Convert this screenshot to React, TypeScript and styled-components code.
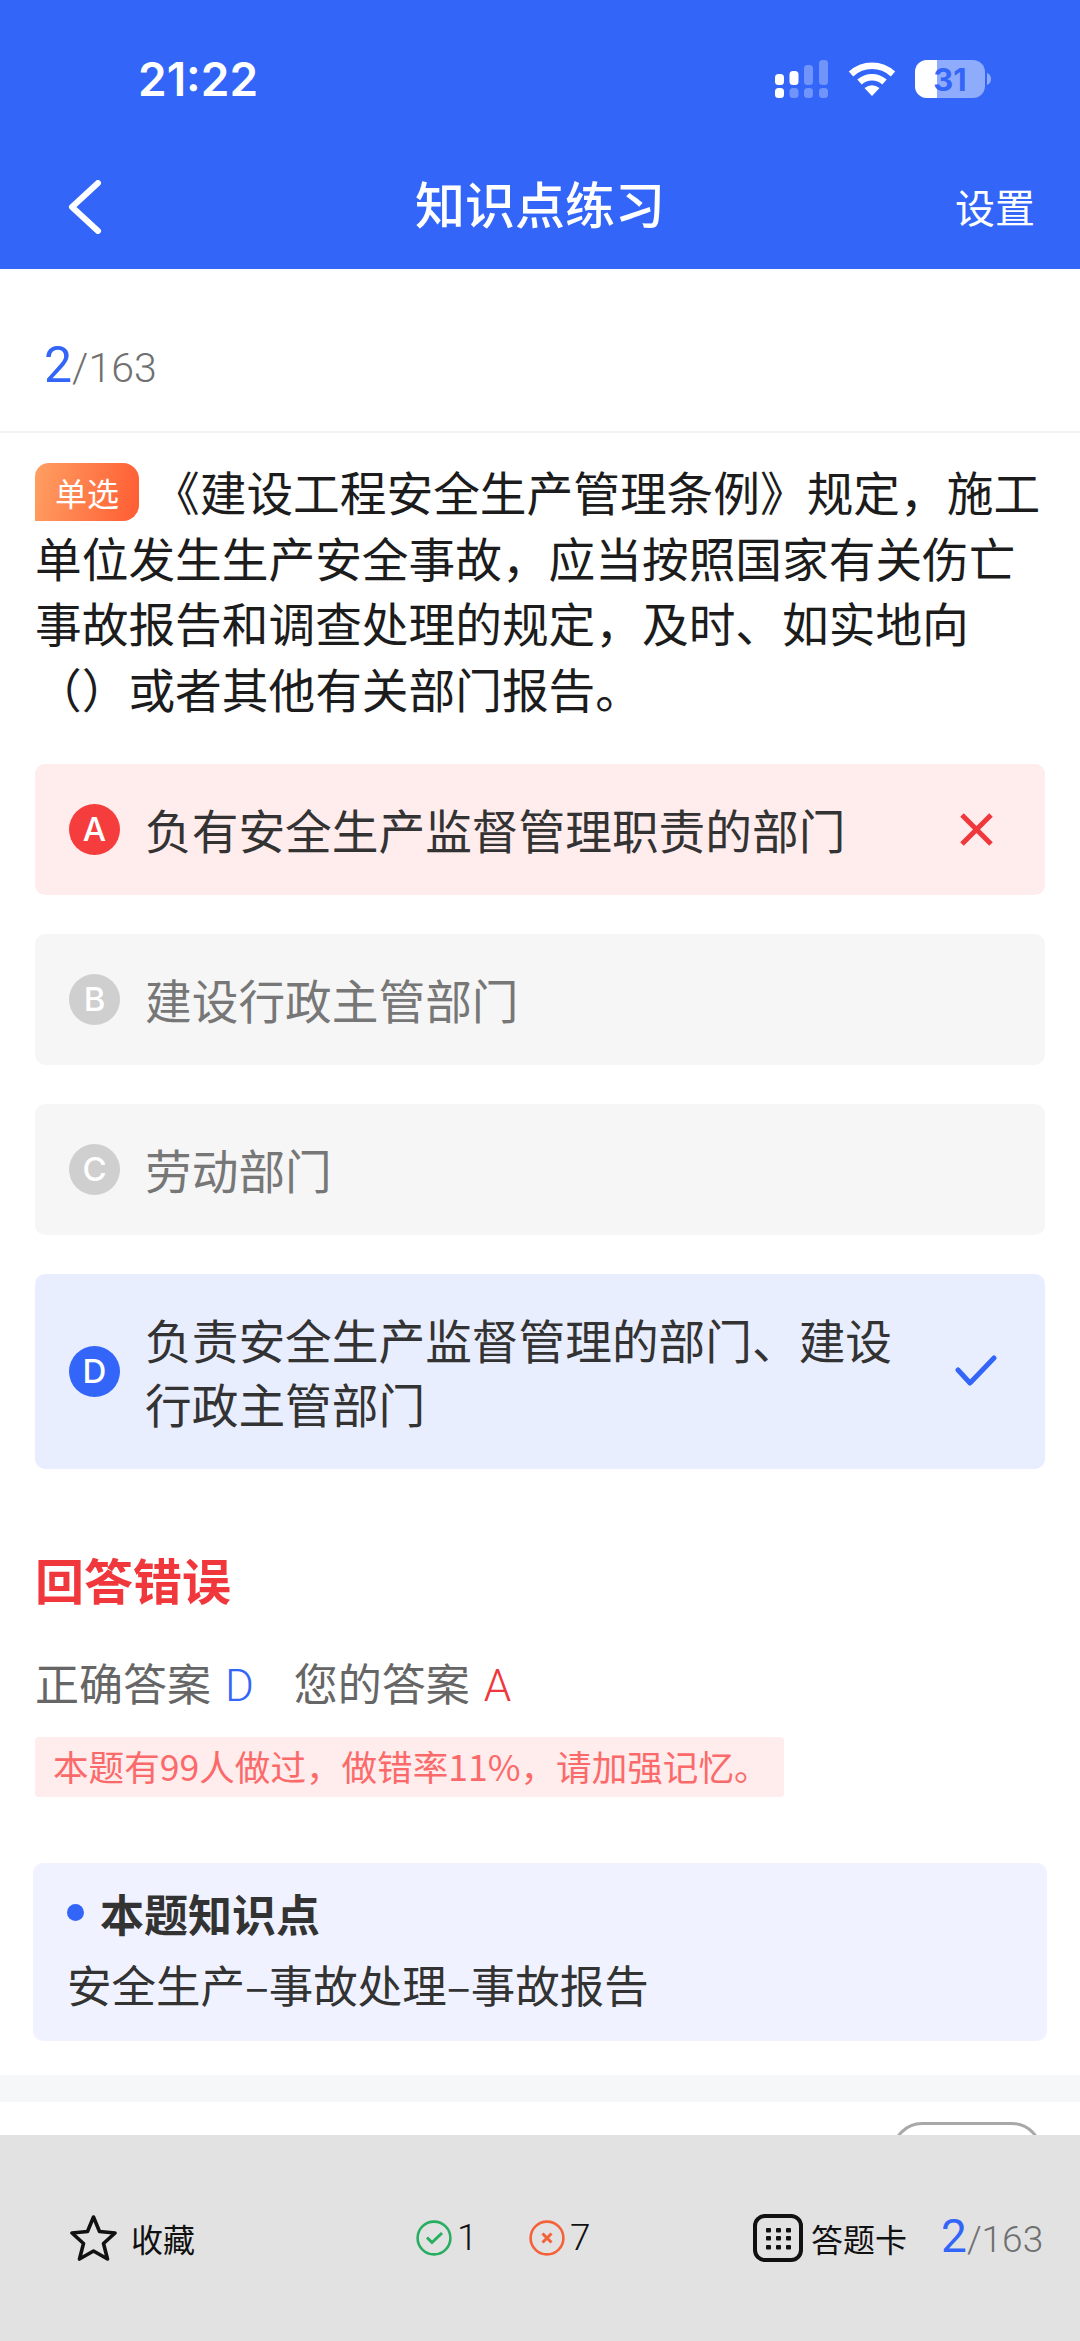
import React from "react";
import styled, { createGlobalStyle } from "styled-components";

const Global = createGlobalStyle`
  html, body { margin: 0; padding: 0; background: #fff; }
  body { width: 1080px; height: 2341px; overflow: hidden; font-family: "Noto Sans CJK SC", "Noto Sans", sans-serif; }
  * { box-sizing: border-box; }
`;
const Page = styled.div`
  width: 1080px; height: 2341px; display: flex; flex-direction: column; overflow: hidden; background: #fff;
`;
const Header = styled.header`
  height: 269px; background: #3366f8; color: #fff; display: flex; flex-direction: column; flex: none;
`;
const StatusBar = styled.div`
  height: 159px; padding: 0 89px 1px 138px; display: flex; align-items: center; justify-content: space-between;
`;
const Time = styled.div`
  font-family: Inter, sans-serif; font-weight: 600; font-size: 46px; line-height: 1;
`;
const StatusIcons = styled.div`
  display: flex; align-items: center; gap: 19px;
`;
const NavBar = styled.div`
  height: 110px; position: relative; display: flex; align-items: center; justify-content: space-between; padding: 0 45px 14px 66px;
`;
const NavTitle = styled.div`
  position: absolute; left: 0; right: 0; top: 8px; text-align: center; font-size: 50px; line-height: 70px; font-weight: 500;
`;
const NavAction = styled.div`
  font-size: 40px; line-height: 56px; margin-top: -2px;
`;
const Progress = styled.div`
  height: 164px; flex: none; padding: 66px 0 0 44px; border-bottom: 2px solid #f3f3f3; font-family: Roboto, sans-serif; line-height: 60px; color: #666;
`;
const ProgressNow = styled.span`
  font-size: ${p => p.$size}px; color: #3366f8;
`;
const ProgressAll = styled.span`
  font-size: ${p => p.$size}px; color: #707070; font-weight: 300;
`;
const Question = styled.div`
  margin: 25px 0 0 35px; font-size: 46.7px; line-height: 65.7px; color: #1c1c1c;
`;
const Tag = styled.span`
  display: inline-flex; width: 104px; height: 58px; margin-right: 14px; vertical-align: 5px; align-items: center; justify-content: center;
  font-size: 32px; line-height: 1; color: #fff; background: linear-gradient(100deg, #ff9f62, #ff5c33); border-radius: 14px 16px 16px 0;
`;
const Line = styled.span`
  display: block; white-space: nowrap;
`;
const Options = styled.div`
  margin: 43px 35px 0; display: flex; flex-direction: column; gap: 39px;
`;
const colors = {
  wrong: { bg: "#ffecec", badge: "#f53d3d", text: "#333" },
  none: { bg: "#f6f6f6", badge: "#cfcfcf", text: "#777" },
  right: { bg: "#e9eefe", badge: "#3366f8", text: "#333" },
};
const Option = styled.div`
  min-height: 131px; padding: 33.5px 48px 33.5px 34px; display: flex; align-items: center; border-radius: 10px;
  background: ${p => colors[p.$kind].bg}; color: ${p => colors[p.$kind].text};
`;
const Badge = styled.span`
  width: 51px; height: 51px; flex: none; border-radius: 50%; display: flex; align-items: center; justify-content: center;
  background: ${p => colors[p.$kind].badge}; color: #fff; font-family: Inter, sans-serif; font-weight: 500; font-size: 33px;
`;
const OptionText = styled.div`
  flex: 1; margin-left: 25px; font-size: 46.7px; line-height: 64px; padding-right: 40px;
`;
const OptionMark = styled.div`
  width: 42px; flex: none; display: flex; justify-content: center;
`;
const Result = styled.div`
  margin: 75px 35px 0;
`;
const ResultTitle = styled.div`
  font-size: 49px; line-height: 70px; font-weight: 700; color: #f0383c;
`;
const AnswerRow = styled.div`
  margin-top: 37px; display: flex; font-size: 44px; line-height: 62px; color: #666;
`;
const AnswerPart = styled.span`
  margin-right: 40px;
`;
const AnswerLetter = styled.span`
  font-family: Roboto, sans-serif; color: ${p => p.$c}; margin-left: 14px; font-weight: 300;
`;
const Tip = styled.div`
  margin-top: 20px; width: 749px; height: 60px; padding-left: 18px; font-size: 35.6px; line-height: 58px; color: #fb6a6a; background: #ffecec; border-radius: 4px; white-space: nowrap;
`;
const Knowledge = styled.div`
  margin: 66px 33px 0; height: 178px; border-radius: 10px; background: #f0f3ff; padding: 19px 34px;
`;
const KnowledgeTitle = styled.div`
  display: flex; align-items: center; gap: 16px; font-size: 44px; line-height: 62px; font-weight: 700; color: #333;
`;
const Dot = styled.i`
  width: 17px; height: 17px; border-radius: 50%; background: #3366f8;
`;
const KnowledgeText = styled.div`
  margin-top: 10px; font-size: 44.5px; line-height: 60px; color: #333;
`;
const Band = styled.div`
  margin-top: 34px; height: 27px; flex: none; background: #f5f7f8;
`;
const Peek = styled.div`
  height: 33px; flex: none; display: flex; justify-content: flex-end; padding: 20px 38px 0 0; overflow: hidden;
`;
const Pill = styled.div`
  width: 150px; height: 70px; border: 3px solid #a8a8a8; border-radius: 30px; flex: none;
`;
const BottomBar = styled.footer`
  flex: 1; background: #e2e2e2; display: flex; align-items: center; padding: 0 0 0 70px; color: #222;
`;
const BarGroup = styled.div`
  display: flex; align-items: center; gap: ${p => p.$gap || 0}px; flex: none;
`;
const BarStat = styled(BarGroup)`
  width: ${p => p.$w}px;
`;
const BarCount = styled.div`
  display: flex; align-items: baseline; line-height: 60px; font-family: Roboto, sans-serif; flex: none;
`;
const BarSpacer = styled.div`
  width: ${p => p.$w}px; flex: none;
`;
const BarLabel = styled.span`
  font-size: ${p => p.$size}px; line-height: 46px; color: #111;
`;
const BarNum = styled.span`
  font-family: Roboto, sans-serif; font-size: 37px; line-height: 46px; color: #111; font-weight: 300;
`;

const Signal = () => (
  <svg width="54" height="38" viewBox="0 0 54 38">
    <g fill="#fff">
      <rect x="0" y="14" width="9" height="11" rx="3.5" />
      <rect x="14.5" y="11" width="9" height="14" rx="3.5" />
      <rect x="0" y="28" width="9" height="10" rx="3.5" />
    </g>
    <g fill="#fff" opacity=".3">
      <rect x="29" y="5" width="9" height="20" rx="3.5" />
      <rect x="44" y="0" width="9" height="25" rx="3.5" />
      <rect x="14.5" y="28" width="9" height="10" rx="3.5" />
      <rect x="29" y="28" width="9" height="10" rx="3.5" />
      <rect x="44" y="28" width="9" height="10" rx="3.5" />
    </g>
  </svg>
);
const Wifi = () => (
  <svg width="48" height="36" viewBox="0 0 48 36" fill="none" stroke="#fff" strokeWidth="6.5">
    <path d="M3 13C15 2 33 2 45 13" />
    <path d="M11.5 21C18.5 14.5 29.5 14.5 36.5 21" />
    <path d="M24 35 L16.5 27 Q24 21.5 31.5 27 Z" fill="#fff" stroke="none" />
  </svg>
);
const Battery = () => (
  <svg width="76" height="38" viewBox="0 0 76 38">
    <rect x="0" y="0" width="70" height="38" rx="12" fill="#fff" opacity=".45" />
    <path d="M12 0H22V38H12A12 12 0 0 1 0 26V12A12 12 0 0 1 12 0Z" fill="#fff" />
    <path d="M72 13C75 14 76 17 76 19C76 21 75 24 72 25Z" fill="#fff" opacity=".45" />
    <text x="35" y="31" textAnchor="middle" fontFamily="Inter, sans-serif" fontWeight="700" fontSize="31" fill="#3366f8">31</text>
  </svg>
);
const Back = () => (
  <svg width="36" height="54" viewBox="0 0 36 54" fill="none" stroke="#fff" strokeWidth="6" strokeLinecap="round" strokeLinejoin="round">
    <path d="M32 3L6 27L32 51" />
  </svg>
);
const Cross = () => (
  <svg width="33" height="33" viewBox="0 0 33 33" fill="none" stroke="#f0383c" strokeWidth="5">
    <path d="M2 2L31 31M31 2L2 31" />
  </svg>
);
const Check = () => (
  <svg width="42" height="32" viewBox="0 0 42 32" fill="none" stroke="#3366f8" strokeWidth="5" strokeLinecap="round" strokeLinejoin="round">
    <path d="M3 15L15 28L39 3" />
  </svg>
);
const Star = () => (
  <svg width="47" height="47" viewBox="0 0 47 47" fill="none" stroke="#111" strokeWidth="3.6" strokeLinejoin="round">
    <path d="M23.5 3L29.5 17.5L45 19L33.5 29.5L37.5 45L23.5 37L9.5 45L13.5 29.5L2 19L17.5 17.5Z" />
  </svg>
);
const OkCircle = () => (
  <svg width="36" height="36" viewBox="0 0 36 36" fill="none" stroke="#27ae60" strokeWidth="2.6">
    <circle cx="18" cy="18" r="16.4" />
    <path d="M11 17.5L16 22.5L26 13" strokeWidth="3" />
  </svg>
);
const NoCircle = () => (
  <svg width="36" height="36" viewBox="0 0 36 36" fill="none" stroke="#f4623a" strokeWidth="2.6">
    <circle cx="18" cy="18" r="16.4" />
    <path d="M13.5 13.5L22.5 22.5M22.5 13.5L13.5 22.5" strokeWidth="3" />
  </svg>
);
const CardIcon = () => (
  <svg width="50" height="48" viewBox="0 0 50 48" fill="none">
    <rect x="2" y="2" width="46" height="44" rx="10" stroke="#111" strokeWidth="4" />
    <g fill="#111">
      {[14, 22, 31].map(y => [13, 23, 33].map(x => <rect key={`${x}-${y}`} x={x} y={y} width="5" height="4.5" rx="1" />))}
    </g>
  </svg>
);

const options = [
  { k: "wrong", l: "A", t: "负有安全生产监督管理职责的部门" },
  { k: "none", l: "B", t: "建设行政主管部门" },
  { k: "none", l: "C", t: "劳动部门" },
  { k: "right", l: "D", t: "负责安全生产监督管理的部门、建设行政主管部门" },
];

export default function App() {
  return (
    <Page>
      <Global />
      <Header>
        <StatusBar>
          <Time>21:22</Time>
          <StatusIcons><Signal /><Wifi /><Battery /></StatusIcons>
        </StatusBar>
        <NavBar>
          <Back />
          <NavTitle>知识点练习</NavTitle>
          <NavAction>设置</NavAction>
        </NavBar>
      </Header>
      <Progress>
        <ProgressNow $size={50}>2</ProgressNow>
        <ProgressAll $size={41}>/163</ProgressAll>
      </Progress>
      <Question>
        <Line><Tag>单选</Tag>《建设工程安全生产管理条例》规定，施工</Line>
        <Line>单位发生生产安全事故，应当按照国家有关伤亡</Line>
        <Line>事故报告和调查处理的规定，及时、如实地向</Line>
        <Line>（）或者其他有关部门报告。</Line>
      </Question>
      <Options>
        {options.map(o => (
          <Option key={o.l} $kind={o.k}>
            <Badge $kind={o.k}>{o.l}</Badge>
            <OptionText>{o.t}</OptionText>
            {o.k === "wrong" && <OptionMark><Cross /></OptionMark>}
            {o.k === "right" && <OptionMark><Check /></OptionMark>}
          </Option>
        ))}
      </Options>
      <Result>
        <ResultTitle>回答错误</ResultTitle>
        <AnswerRow>
          <AnswerPart>正确答案<AnswerLetter $c="#3366f8">D</AnswerLetter></AnswerPart>
          <AnswerPart>您的答案<AnswerLetter $c="#f0383c">A</AnswerLetter></AnswerPart>
        </AnswerRow>
        <Tip>本题有99人做过，做错率11%，请加强记忆。</Tip>
      </Result>
      <Knowledge>
        <KnowledgeTitle><Dot />本题知识点</KnowledgeTitle>
        <KnowledgeText>安全生产–事故处理–事故报告</KnowledgeText>
      </Knowledge>
      <Band />
      <Peek><Pill /></Peek>
      <BottomBar>
        <BarGroup $gap={14}><Star /><BarLabel $size={32}>收藏</BarLabel></BarGroup>
        <BarSpacer $w={221} />
        <BarStat $gap={5} $w={113}><OkCircle /><BarNum>1</BarNum></BarStat>
        <BarStat $gap={5} $w={224}><NoCircle /><BarNum>7</BarNum></BarStat>
        <BarGroup $gap={8}><CardIcon /><BarLabel $size={32}>答题卡</BarLabel></BarGroup>
        <BarSpacer $w={34} />
        <BarCount>
          <ProgressNow $size={46}>2</ProgressNow>
          <ProgressAll $size={37}>/163</ProgressAll>
        </BarCount>
      </BottomBar>
    </Page>
  );
}
